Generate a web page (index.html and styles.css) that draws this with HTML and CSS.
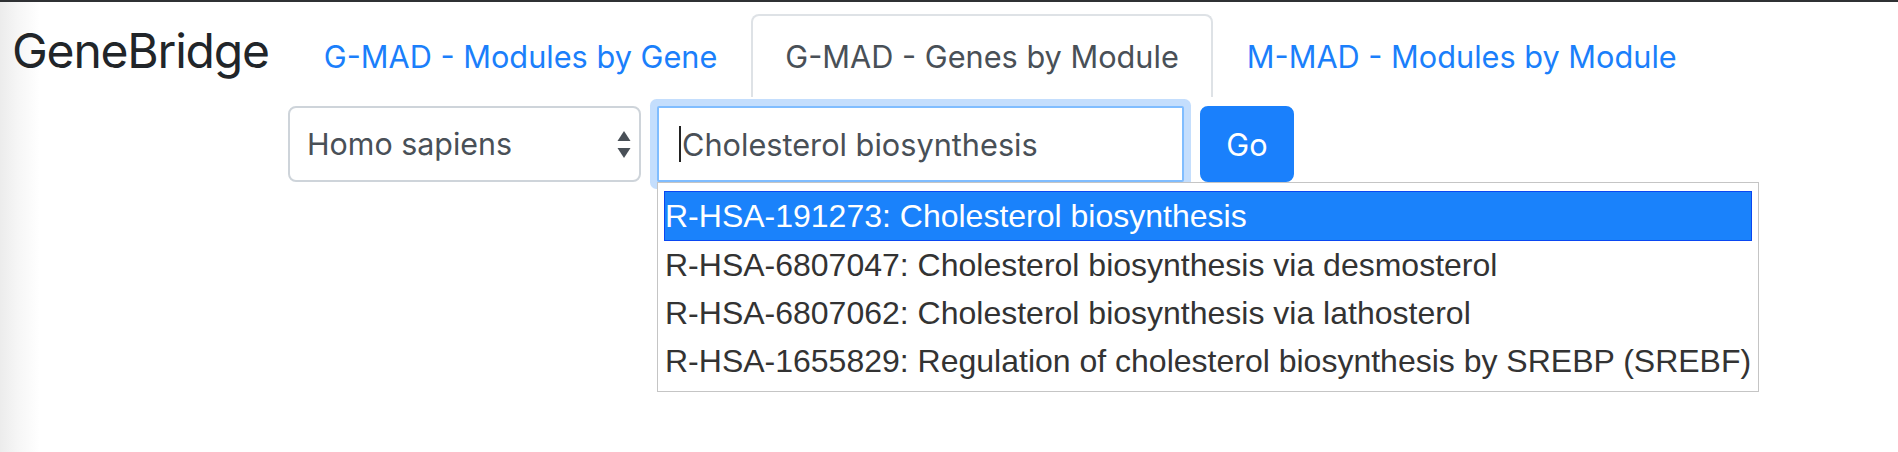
FILE: index.html
```html
<!DOCTYPE html>
<html lang="en">
<head>
<meta charset="utf-8">
<title>GeneBridge</title>
<link rel="stylesheet" href="styles.css">
</head>
<body>
<div class="topline"></div>
<header class="header">
  <a class="brand">GeneBridge</a>
  <ul class="tabs">
    <li><a class="tab-link">G-MAD - Modules by Gene</a></li>
    <li><a class="tab-link active">G-MAD - Genes by Module</a></li>
    <li><a class="tab-link">M-MAD - Modules by Module</a></li>
  </ul>
</header>
<form class="search-row">
  <div class="select">
    <span>Homo sapiens</span>
    <svg class="select-arrows" width="14" height="28" viewBox="0 0 14 28"><path d="M7 0 L13.5 10 L0.5 10 Z" fill="#495057"/><path d="M7 27 L13.5 17 L0.5 17 Z" fill="#495057"/></svg>
  </div>
  <div class="input-wrap">
    <div class="input"><span class="caret"></span>Cholesterol biosynthesis</div>
    <ul class="menu">
      <li class="menu-item active">R-HSA-191273: Cholesterol biosynthesis</li>
      <li class="menu-item">R-HSA-6807047: Cholesterol biosynthesis via desmosterol</li>
      <li class="menu-item">R-HSA-6807062: Cholesterol biosynthesis via lathosterol</li>
      <li class="menu-item">R-HSA-1655829: Regulation of cholesterol biosynthesis by SREBP (SREBF)</li>
    </ul>
  </div>
  <button class="go" type="button">Go</button>
</form>
</body>
</html>
```
FILE: styles.css
```css
html, body {
  margin: 0;
  padding: 0;
}
body {
  width: 1898px;
  height: 452px;
  overflow: hidden;
  background: linear-gradient(to right, #ececec 0px, #f6f6f6 18px, #ffffff 40px);
  font-family: Inter, "Noto Sans", sans-serif;
}
.topline {
  height: 2px;
  background: #2f3134;
}
.header {
  display: flex;
  align-items: baseline;
  padding: 12px 0 0 12px;
}
.brand {
  font-family: Inter, sans-serif;
  font-size: 48px;
  letter-spacing: -1.2px;
  color: #212529;
  margin-right: 21px;
}
.tabs {
  display: flex;
  list-style: none;
  margin: 0;
  padding: 0;
}
.tab-link {
  display: block;
  font-size: 30.7px;
  line-height: 45px;
  padding: 18px 32px;
  border: 2px solid transparent;
  border-bottom: 0;
  border-radius: 8px 8px 0 0;
  color: #1b7ffb;
  background: transparent;
}
.tab-link.active {
  color: #495057;
  border-color: #dee2e6;
  background: #fff;
}
.search-row {
  display: flex;
  align-items: flex-start;
  gap: 16px;
  margin: 9px 0 0 288px;
}
.select {
  box-sizing: border-box;
  width: 353px;
  height: 76px;
  display: flex;
  align-items: center;
  justify-content: space-between;
  padding: 0 8px 0 17px;
  border: 2px solid #ced4da;
  border-radius: 8px;
  background: #fff;
  font-size: 30.4px;
  color: #495057;
}
.select-arrows {
  display: block;
  margin-top: 2px;
}
.input-wrap {
  position: relative;
}
.input {
  box-sizing: border-box;
  width: 527px;
  height: 76px;
  display: flex;
  align-items: center;
  padding: 0 0 0 20px;
  border: 2px solid #80bdff;
  border-radius: 2px;
  box-shadow: 0 0 0 7px #c4defd;
  background: #fff;
  font-size: 30.7px;
  color: #495057;
}
.caret {
  display: inline-block;
  width: 2px;
  height: 36px;
  background: #222;
  margin-right: 1px;
}
.go {
  box-sizing: border-box;
  width: 94px;
  height: 76px;
  border: 2px solid #1a80fc;
  border-radius: 8px;
  background: #1a80fc;
  color: #fff;
  font-family: Inter, sans-serif;
  font-size: 30.7px;
  padding: 0;
}
.menu {
  position: absolute;
  top: 100%;
  left: 0;
  box-sizing: border-box;
  width: 1102px;
  margin: 0;
  padding: 8px 0 6px;
  list-style: none;
  border: 1px solid #c5c5c5;
  background: #fff;
  font-family: "Liberation Sans", Arial, sans-serif;
  font-size: 32px;
  line-height: 48px;
  color: #333;
}
.menu-item {
  padding-left: 7px;
  white-space: nowrap;
}
.menu-item.active {
  margin: 0 6px;
  padding-left: 0;
  border: 1px solid #0a47f2;
  background: #1a82fb;
  color: #fff;
}
```
